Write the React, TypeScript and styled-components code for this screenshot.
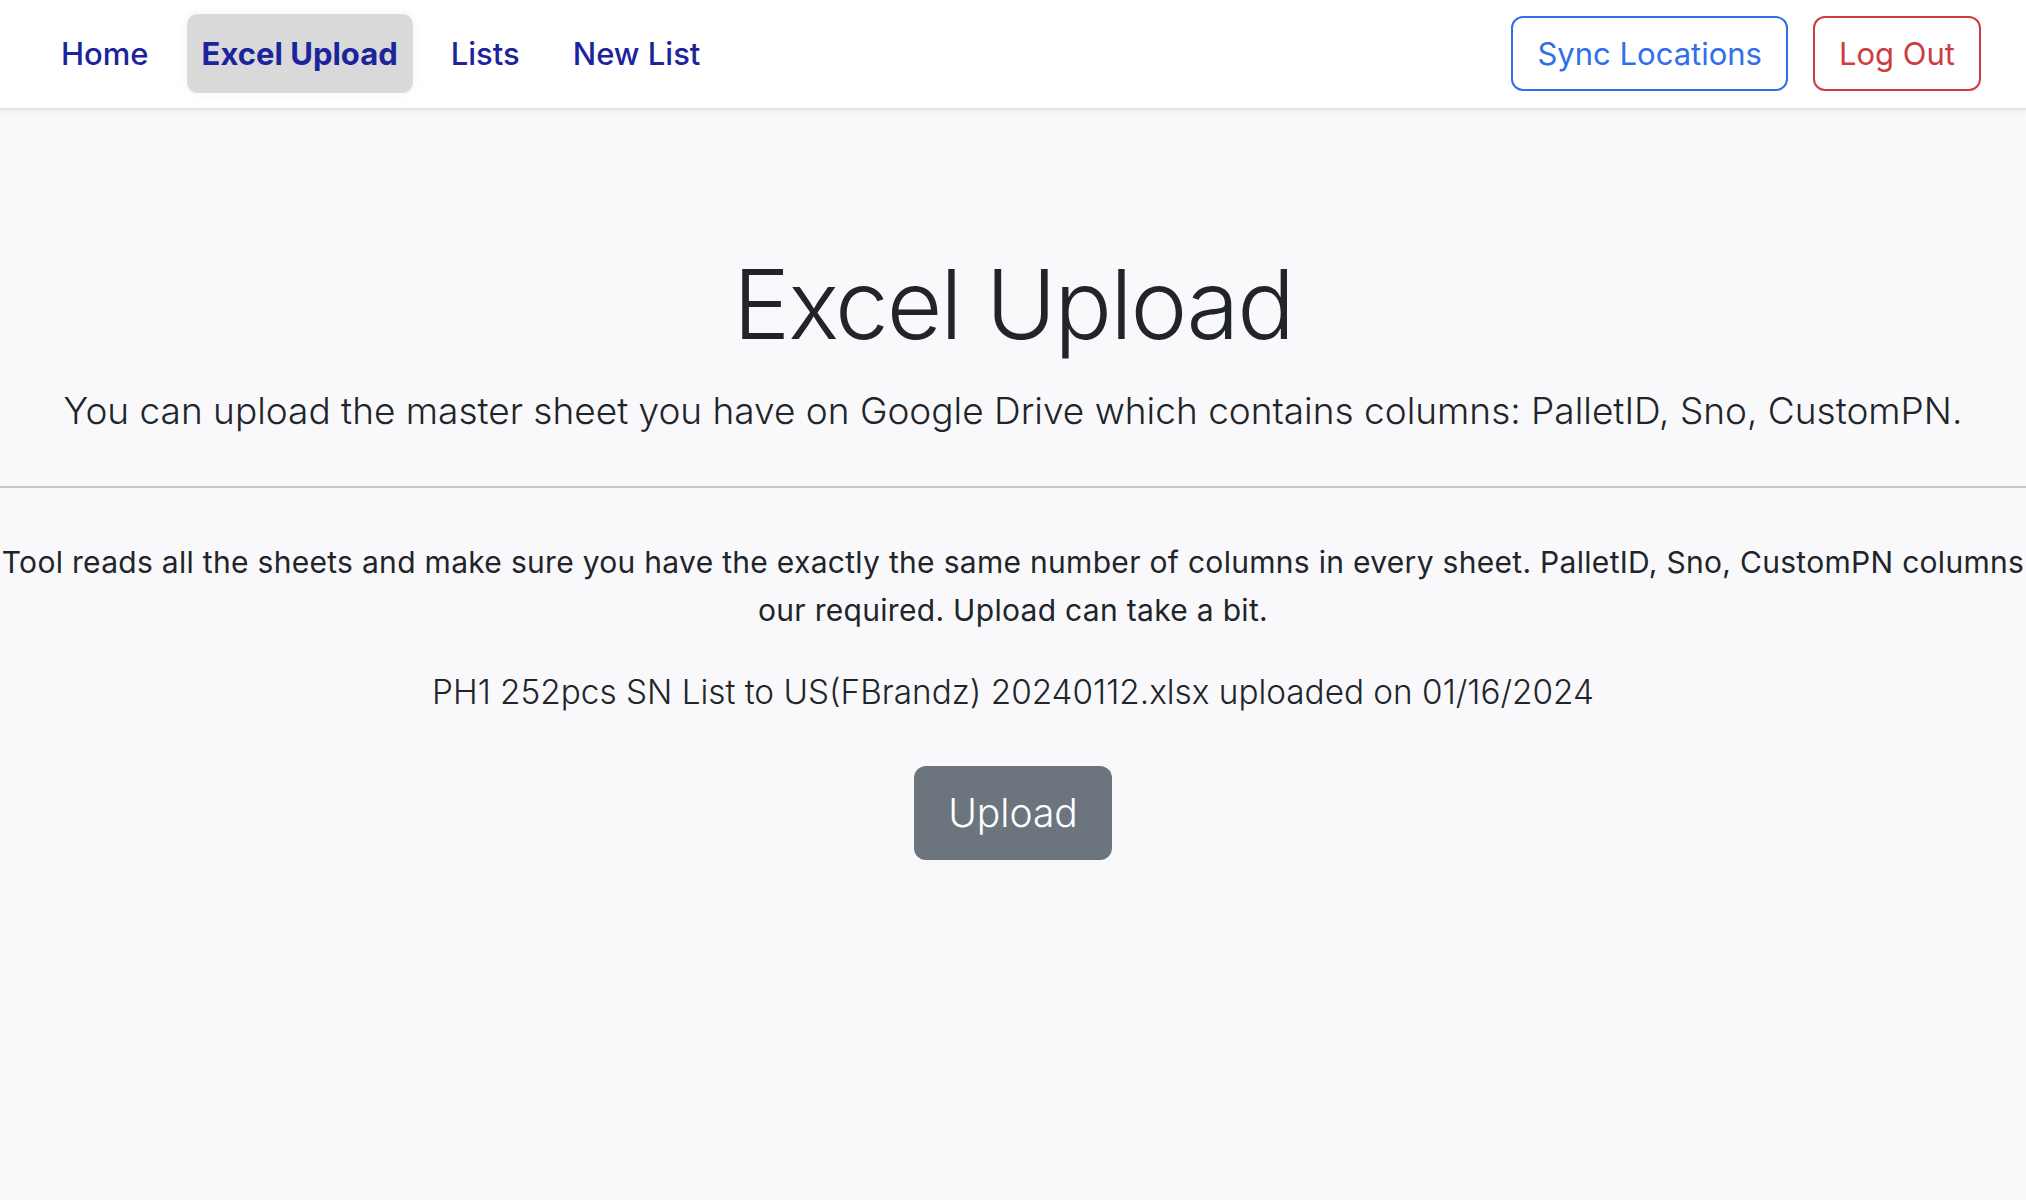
import React from "react";
import styled, { createGlobalStyle } from "styled-components";

const Global = createGlobalStyle`
  html, body { margin: 0; padding: 0; }
  body {
    background: #f9f9fb;
    font-family: Inter, "Noto Sans", "Liberation Sans", sans-serif;
    color: #212529;
    min-height: 1200px;
  }
  * { box-sizing: border-box; }
`;

const NavBar = styled.nav`
  height: 110px;
  background: #ffffff;
  display: flex;
  align-items: center;
  justify-content: space-between;
  padding: 0 45px 2px 46px;
  border-bottom: 2px solid #e3e3e6;
  box-shadow: 0 2px 6px rgba(0, 0, 0, 0.05);
`;

const NavLinks = styled.div`
  display: flex;
  align-items: center;
  gap: 23px;
`;

const NavLink = styled.a<{ $active?: boolean }>`
  display: flex;
  align-items: center;
  height: 79px;
  padding: 0 15px;
  border-radius: 11px;
  font-size: 31px;
  font-weight: ${(p) => (p.$active ? 700 : 500)};
  color: #1c249c;
  text-decoration: none;
  background: ${(p) => (p.$active ? "#d9d9d9" : "transparent")};
  box-shadow: ${(p) => (p.$active ? "0 0 10px rgba(0,0,0,0.06)" : "none")};
`;

const NavActions = styled.div`
  display: flex;
  align-items: center;
  gap: 25px;
`;

const OutlineButton = styled.button<{ $tone: string }>`
  height: 75px;
  padding: 0 24px;
  border: 2px solid ${(p) => p.$tone};
  color: ${(p) => p.$tone};
  background: transparent;
  border-radius: 12px;
  font-family: inherit;
  font-size: 31px;
  font-weight: 400;
`;

const Main = styled.main`
  display: flex;
  flex-direction: column;
  align-items: center;
  text-align: center;
`;

const Hero = styled.header`
  padding: 137px 0 0;
  display: flex;
  flex-direction: column;
  align-items: center;
`;

const Title = styled.h1`
  margin: 0;
  font-size: 96px;
  font-weight: 300;
  line-height: 1.2;
  letter-spacing: -2px;
`;

const Lead = styled.p`
  margin: 21px 0 0;
  font-size: 37px;
  font-weight: 300;
  line-height: 1.5;
`;

const Divider = styled.hr`
  align-self: stretch;
  margin: 47px 0 0;
  border: 0;
  border-top: 2px solid #c7c7c9;
`;

const Body = styled.p`
  margin: 50px 0 0;
  font-size: 30px;
  line-height: 48px;
  letter-spacing: 0.3px;
`;

const FileInfo = styled.p`
  margin: 34px 0 0;
  font-size: 33.3px;
  font-weight: 300;
  line-height: 1.5;
`;

const UploadButton = styled.button`
  margin-top: 48px;
  height: 94px;
  padding: 0 34px;
  background: #6c757d;
  color: #ffffff;
  border: 0;
  border-radius: 12px;
  font-family: inherit;
  font-size: 39px;
  font-weight: 300;
`;

export default function App() {
  return (
    <>
      <Global />
      <NavBar>
        <NavLinks>
          <NavLink href="#">Home</NavLink>
          <NavLink href="#" $active>
            Excel Upload
          </NavLink>
          <NavLink href="#">Lists</NavLink>
          <NavLink href="#">New List</NavLink>
        </NavLinks>
        <NavActions>
          <OutlineButton $tone="#2f6fea">Sync Locations</OutlineButton>
          <OutlineButton $tone="#cc3d42">Log Out</OutlineButton>
        </NavActions>
      </NavBar>
      <Main>
        <Hero>
          <Title>Excel Upload</Title>
          <Lead>
            You can upload the master sheet you have on Google Drive which
            contains columns: PalletID, Sno, CustomPN.
          </Lead>
        </Hero>
        <Divider />
        <Body>
          Tool reads all the sheets and make sure you have the exactly the same
          number of columns in every sheet. PalletID, Sno, CustomPN columns our
          required. Upload can take a bit.
        </Body>
        <FileInfo>
          PH1 252pcs SN List to US(FBrandz) 20240112.xlsx uploaded on 01/16/2024
        </FileInfo>
        <UploadButton>Upload</UploadButton>
      </Main>
    </>
  );
}
